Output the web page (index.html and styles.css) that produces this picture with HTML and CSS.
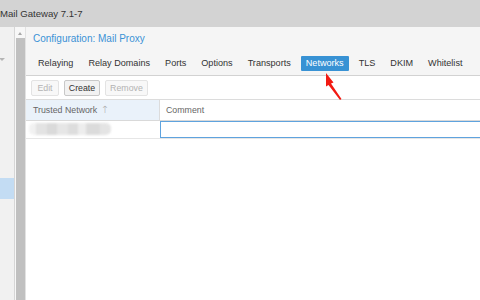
FILE: index.html
```html
<!DOCTYPE html>
<html>
<head>
<meta charset="utf-8">
<link rel="stylesheet" href="styles.css">
</head>
<body>
<div class="topbar">Mail Gateway 7.1-7</div>
<div class="main">
  <div class="nav">
    <div class="nav-caret"></div>
    <div class="nav-selected"></div>
  </div>
  <div class="scroll">
    <div class="scroll-up"></div>
    <div class="scroll-thumb"></div>
  </div>
  <div class="panel">
    <div class="phead">
      <div class="ptitle">Configuration: Mail Proxy</div>
      <div class="tabs">
        <span class="tab">Relaying</span>
        <span class="tab">Relay Domains</span>
        <span class="tab">Ports</span>
        <span class="tab">Options</span>
        <span class="tab">Transports</span>
        <span class="tab active">Networks</span>
        <span class="tab">TLS</span>
        <span class="tab">DKIM</span>
        <span class="tab">Whitelist</span>
      </div>
    </div>
    <div class="toolbar">
      <span class="btn disabled w-edit">Edit</span>
      <span class="btn w-create">Create</span>
      <span class="btn disabled w-remove">Remove</span>
    </div>
    <div class="grid-head">
      <div class="col1 sorted">Trusted Network <span class="sort">↑</span></div>
      <div class="col2">Comment</div>
    </div>
    <div class="grid-row">
      <div class="col1"><div class="mosaic"></div></div>
      <div class="col2 editing"></div>
    </div>
  </div>
</div>
<svg class="annot" width="480" height="300" viewBox="0 0 480 300">
  <polygon points="326,73 333.5,82.5 331,83.5 341.5,99 340,100 328.5,85 326,86.5" fill="#f21a12"/>
</svg>
</body>
</html>
```

FILE: styles.css
```css
html, body {
  margin: 0;
  padding: 0;
}
body {
  width: 480px;
  height: 300px;
  overflow: hidden;
  position: relative;
  font-family: "Liberation Sans", Arial, sans-serif;
  background: #fff;
  color: #333;
}
.topbar {
  height: 27px;
  line-height: 27px;
  background: #d3d3d3;
  font-size: 9.6px;
  color: #333;
  box-sizing: border-box;
}
.main {
  display: flex;
  height: 273px;
}
.nav {
  width: 14px;
  background: #f1f1f1;
  border-right: 1px solid #d6d6d6;
  display: flex;
  flex-direction: column;
}
.nav-caret {
  margin-top: 31px;
  margin-left: -1px;
  width: 0;
  height: 0;
  border-left: 3px solid transparent;
  border-right: 3px solid transparent;
  border-top: 3px solid #b5b5b5;
}
.nav-selected {
  margin-top: 117px;
  height: 21px;
  background: #c3dcf3;
}
.scroll {
  width: 10px;
  background: #f7f7f7;
  border-right: 1px solid #e2e2e2;
  display: flex;
  flex-direction: column;
  align-items: flex-end;
}
.scroll-up {
  margin-top: 5px;
  margin-right: 3px;
  width: 0;
  height: 0;
  border-left: 2px solid transparent;
  border-right: 2px solid transparent;
  border-bottom: 3px solid #a8a8a8;
}
.scroll-thumb {
  margin-top: 3px;
  width: 9px;
  flex: 1;
  background: #c0c0c0;
}
.panel {
  flex: 1;
  display: flex;
  flex-direction: column;
  background: #fff;
}
.phead {
  background: #f5f5f5;
  border-bottom: 1px solid #d2d2d2;
  padding: 6px 0 4px 7px;
}
.ptitle {
  font-size: 10px;
  line-height: 12px;
  color: #3a92d6;
}
.tabs {
  margin-top: 11px;
  display: flex;
  gap: 5px;
}
.tab {
  font-size: 9.1px;
  line-height: 15px;
  height: 15px;
  padding: 0 5px;
  color: #333;
  white-space: nowrap;
}
.tab.active {
  background: #3892d4;
  color: #fff;
  border-radius: 1px;
}
.toolbar {
  height: 24px;
  box-sizing: border-box;
  padding: 4px 0 4px 5px;
  display: flex;
  gap: 5px;
  border-bottom: 1px solid #dcdcdc;
}
.btn {
  box-sizing: border-box;
  height: 16px;
  line-height: 14px;
  font-size: 8.8px;
  text-align: center;
  border: 1px solid #c8c8c8;
  background: #f2f2f2;
  border-radius: 2px;
  color: #333;
}
.btn.disabled {
  border-color: #e3e3e3;
  background: #f8f8f8;
  color: #b3b3b3;
}
.w-edit { width: 28px; }
.w-create { width: 36px; }
.w-remove { width: 43px; }
.grid-head {
  display: flex;
  height: 21px;
  box-sizing: border-box;
  border-bottom: 1px solid #d9d9d9;
  font-size: 8.8px;
  color: #666;
}
.grid-head .col1 {
  width: 134px;
  border-right: 1px solid #dcdcdc;
  padding-left: 7px;
  line-height: 20px;
  box-sizing: border-box;
}
.grid-head .sorted {
  background: #eaf2fa;
}
.sort {
  color: #a5a5a5;
  font-family: "DejaVu Sans", sans-serif;
  font-size: 10px;
  font-weight: 300;
  margin-left: 1px;
}
.grid-head .col2 {
  flex: 1;
  padding-left: 6px;
  line-height: 20px;
}
.grid-row {
  display: flex;
  height: 18px;
  box-sizing: border-box;
  border-bottom: 1px solid #e6e6e6;
}
.grid-row .col1 {
  width: 134px;
  padding: 2px 0 0 3px;
  box-sizing: border-box;
}
.mosaic {
  width: 82px;
  height: 12px;
  border-radius: 5px;
  background: linear-gradient(90deg, #f0f0f0 0 8%, #e0e0e0 8% 22%, #d6d6d6 22% 34%, #e4e4e4 34% 48%, #dadada 48% 60%, #ececec 60% 70%, #d8d8d8 70% 86%, #e2e2e2 86% 100%);
  filter: blur(1px);
  opacity: 0.9;
}
.grid-row .editing {
  flex: 1;
  border: 1px solid #5fa3de;
  border-right: none;
  height: 17px;
  box-sizing: border-box;
}
.annot {
  position: absolute;
  left: 0;
  top: 0;
  pointer-events: none;
}
```
